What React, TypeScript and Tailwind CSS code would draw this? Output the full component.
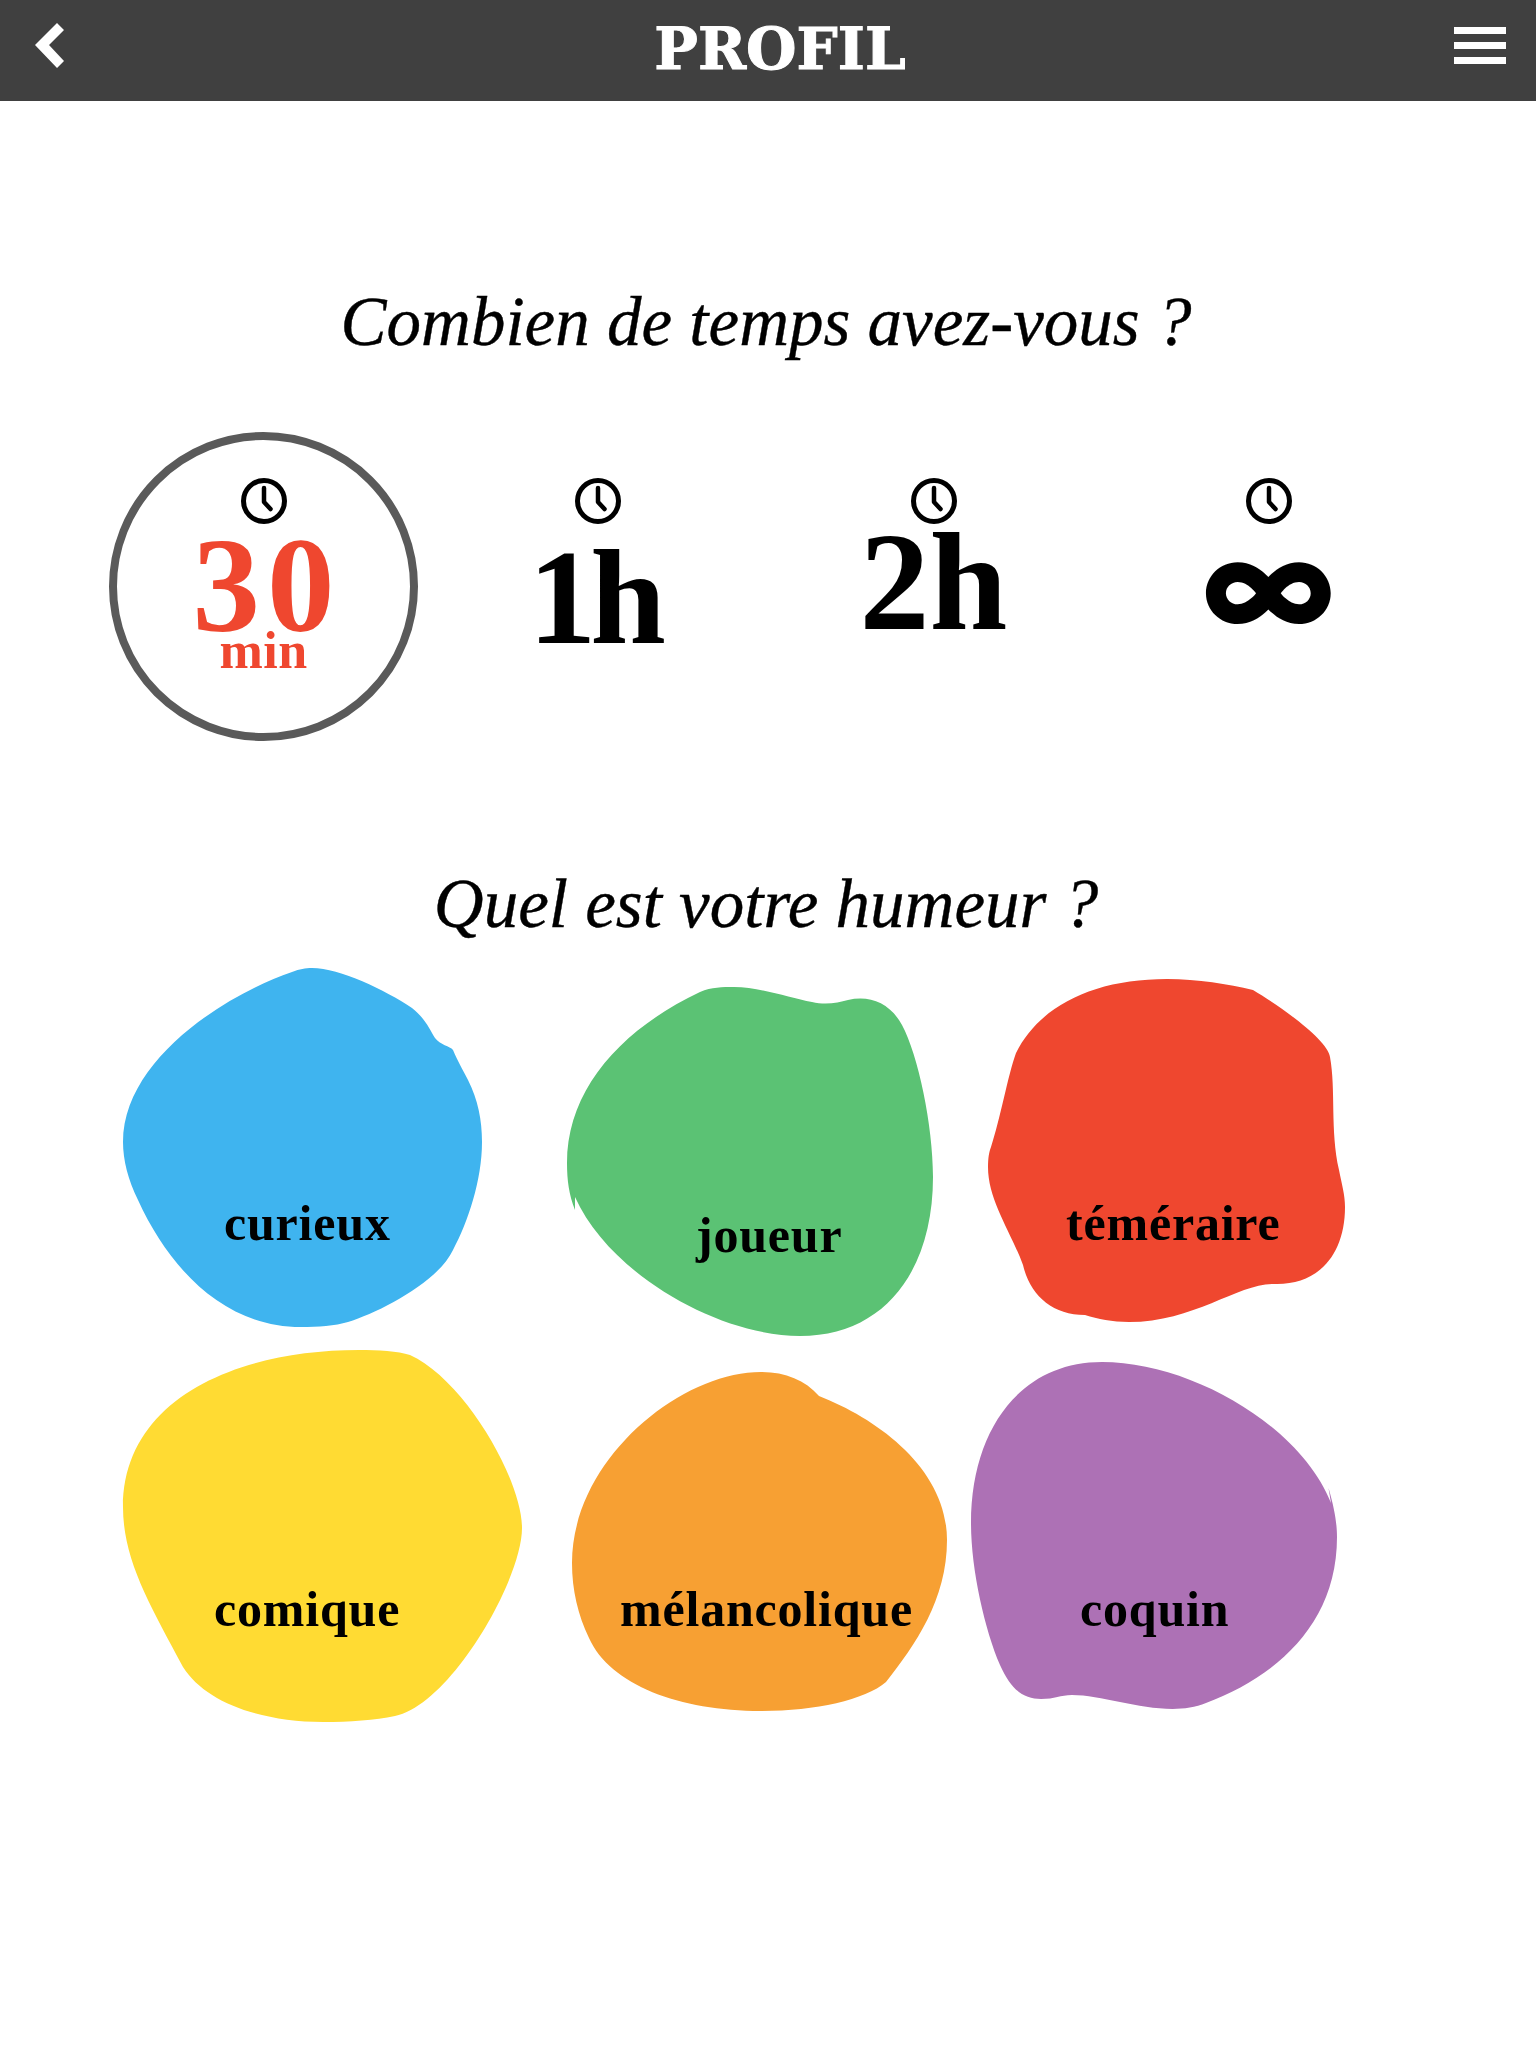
const durations = [
  { label: "30", unit: "min", selected: true, numberClass: "mt-[-6px] pl-[7px] text-[135px] font-bold tracking-[7px] text-[#ef472f]" },
  { label: "1h", numberClass: "mt-[5px] mr-[9px] text-[136px] font-bold tracking-[-6px] text-black" },
  { label: "2h", numberClass: "mt-[-12px] text-[140px] font-bold text-black" },
  { label: "∞", numberClass: "mt-[-5px] font-['Inter',sans-serif] text-[135px] font-extrabold text-black" },
];

const moods = [
  {
    label: "curieux",
    box: "96 960 456 385",
    fill: "#3fb4ef",
    labelClass: "left-[128px] top-[238px]",
    d: "M292 972 C300 969 305 968 312 968 C340 968 385 990 412 1008 C425 1018 430 1030 435 1038 C440 1045 450 1046 453 1050 C458 1062 462 1068 468 1080 C478 1100 482 1120 482 1142 C482 1180 468 1222 453 1250 C438 1282 380 1312 348 1322 C335 1326 318 1327 301 1327 C225 1327 170 1270 138 1200 C128 1180 123 1160 123 1142 C123 1060 225 995 292 972 Z",
  },
  {
    label: "joueur",
    box: "552 960 408 385",
    fill: "#5bc274",
    labelClass: "left-[144px] top-[250px]",
    d: "M700 992 C712 987 722 987 734 987 C760 987 790 998 812 1002 C825 1005 838 1003 848 1000 C870 995 890 1003 902 1025 C918 1055 933 1125 933 1177 C933 1270 885 1336 800 1336 C720 1336 610 1275 575 1197 L575 1210 C569 1195 567 1180 567 1163 C567 1090 620 1030 700 992 Z",
  },
  {
    label: "téméraire",
    box: "960 960 476 385",
    fill: "#ef472f",
    labelClass: "left-[106px] top-[238px]",
    d: "M1016 1053 C1040 1005 1095 979 1167 979 C1198 979 1228 984 1253 990 C1280 1006 1328 1040 1330 1057 C1336 1090 1330 1130 1339 1170 C1342 1185 1345 1195 1345 1207 C1345 1255 1318 1285 1275 1284 C1240 1282 1195 1322 1129 1322 C1112 1322 1098 1319 1085 1315 C1052 1315 1030 1295 1023 1265 C1010 1230 988 1200 988 1167 C988 1158 989 1152 991 1147 C1000 1120 1008 1075 1016 1053 Z",
  },
  {
    label: "comique",
    box: "96 1345 456 385",
    fill: "#ffdb33",
    labelClass: "left-[118px] top-[239px]",
    d: "M359 1350 C378 1350 398 1351 410 1355 C465 1380 522 1480 522 1528 C522 1580 450 1705 395 1716 C375 1720 350 1722 323 1722 C260 1722 205 1702 183 1667 C150 1605 123 1560 123 1507 C123 1400 235 1350 359 1350 Z",
  },
  {
    label: "mélancolique",
    box: "552 1345 408 385",
    fill: "#f7a033",
    labelClass: "left-[68px] top-[239px]",
    d: "M761 1372 C785 1372 805 1380 819 1396 C880 1420 947 1470 947 1540 C947 1600 915 1645 886 1682 C865 1700 815 1711 761 1711 C680 1711 610 1685 589 1638 C578 1615 572 1590 572 1563 C572 1460 680 1372 761 1372 Z",
  },
  {
    label: "coquin",
    box: "960 1345 476 385",
    fill: "#ad71b5",
    labelClass: "left-[120px] top-[239px]",
    d: "M1102 1362 C1190 1362 1300 1425 1331 1503 L1328.5 1488 C1335 1510 1337 1525 1337 1537 C1337 1625 1275 1677 1206 1703 C1165 1720 1110 1695 1072 1695 C1060 1695 1055 1699 1041 1699 C1025 1699 1012 1692 1000 1665 C985 1630 971 1570 971 1523 C971 1430 1020 1362 1102 1362 Z",
  },
];

function ClockIcon() {
  return (
    <svg viewBox="0 0 46 46" className="block size-[46px]" fill="none" stroke="black" aria-hidden="true">
      <circle cx="23" cy="23" r="20.5" strokeWidth="5" />
      <path d="M23 10 V24 L29.5 31" strokeWidth="4.5" strokeLinecap="round" strokeLinejoin="round" />
    </svg>
  );
}

export default function App() {
  return (
    <div className="min-h-[2048px] bg-white font-['Liberation_Serif',serif] text-black">
      <header className="flex h-[101px] items-start bg-[#404040] pl-[35px] pr-[30px]">
        <svg viewBox="0 0 30 46" className="mt-[23px] h-[46px] w-[30px]" fill="white" aria-hidden="true">
          <polygon points="0,22 22,0 29,7 14,22 29,38 22,45" />
        </svg>
        <h1 className="mt-[20px] flex-1 pl-[41px] text-center font-['DejaVu_Serif',serif] text-[58px] font-bold leading-none text-white [-webkit-text-stroke:1px_white]">
          PROFIL
        </h1>
        <div className="mt-[27px] flex w-[52px] flex-col gap-2">
          <span className="h-[7px] bg-white" />
          <span className="h-[7px] bg-white" />
          <span className="h-[7px] bg-white" />
        </div>
      </header>

      <main className="ml-[96px] w-[1340px]">
        <h2 className="mt-[187px] text-center text-[69px] italic leading-none [-webkit-text-stroke:0.4px_black]">
          Combien de temps avez-vous ?
        </h2>

        <div className="mt-[75px] grid grid-cols-4">
          {durations.map((item) => (
            <div key={item.label} className="flex h-[309px] flex-col items-center">
              <div
                className={
                  item.selected
                    ? "flex size-[309px] flex-col items-center rounded-full border-[8px] border-[#5a5a5a] pt-[38px]"
                    : "flex flex-col items-center pt-[46px]"
                }
              >
                <ClockIcon />
                <span className={`leading-none ${item.numberClass}`}>{item.label}</span>
                {item.unit ? (
                  <span className="mt-[-28px] text-[52px] font-bold leading-none tracking-[0.5px] text-[#ef472f]">
                    {item.unit}
                  </span>
                ) : null}
              </div>
            </div>
          ))}
        </div>

        <h2 className="mt-[129px] text-center text-[69px] italic leading-none [-webkit-text-stroke:0.4px_black]">
          Quel est votre humeur ?
        </h2>
      </main>

      <div className="ml-[96px] mt-[21px] grid w-[1340px] grid-cols-[456px_408px_476px]">
        {moods.map((mood) => (
          <div key={mood.label} className="relative h-[385px]">
            <svg viewBox={mood.box} className="block h-full w-full" aria-hidden="true">
              <path d={mood.d} fill={mood.fill} />
            </svg>
            <span className={`absolute text-[50px] font-bold leading-none tracking-[0.8px] ${mood.labelClass}`}>
              {mood.label}
            </span>
          </div>
        ))}
      </div>
    </div>
  );
}
